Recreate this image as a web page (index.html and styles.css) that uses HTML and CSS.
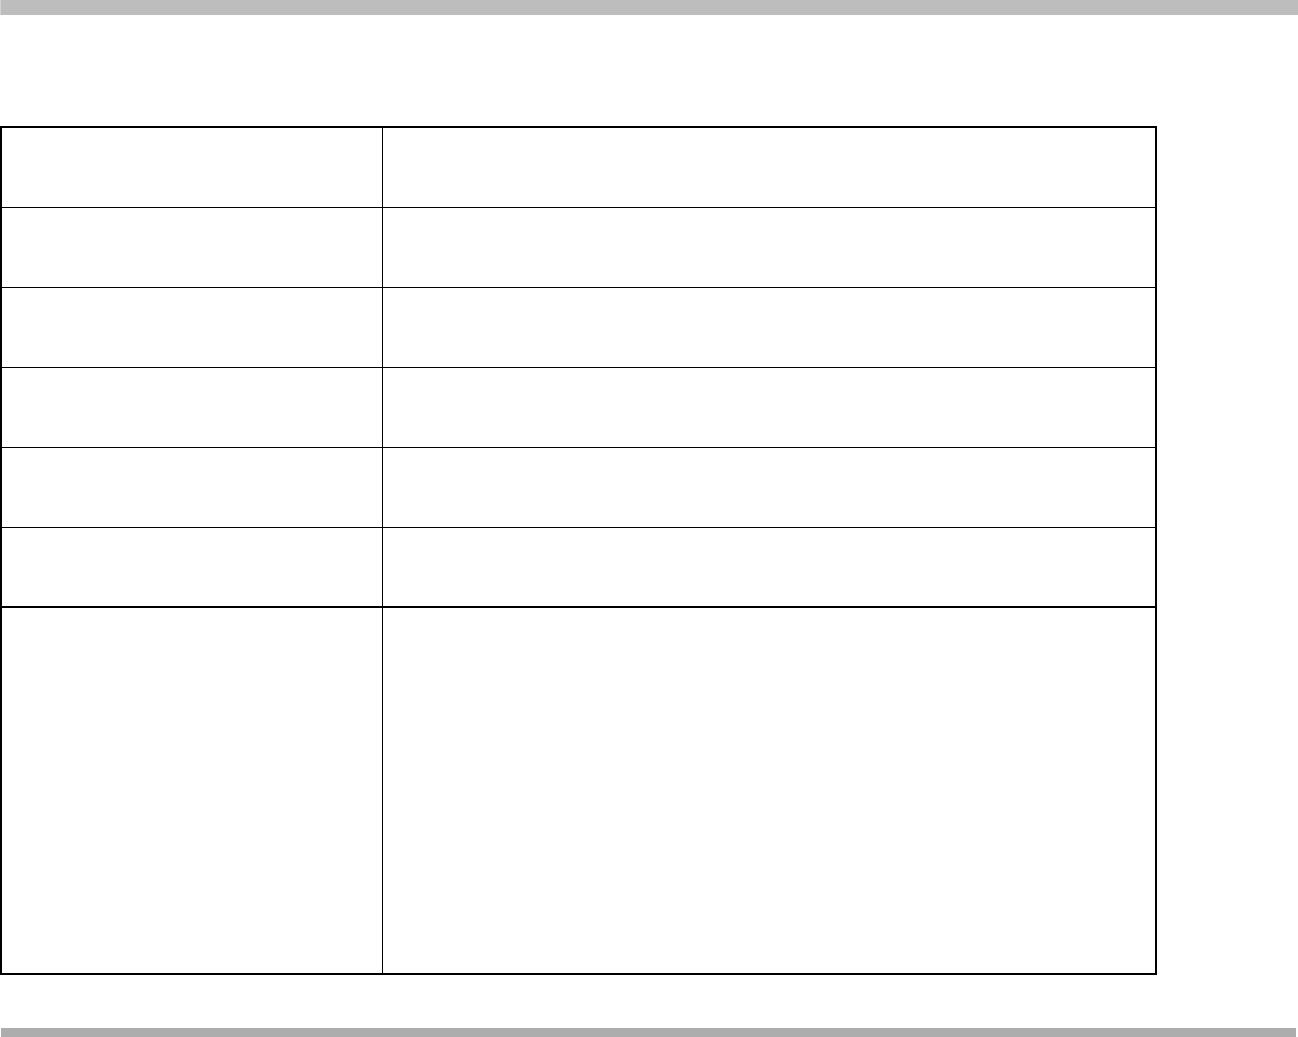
FILE: index.html
```html
<!DOCTYPE html>
<html>
<head>
<meta charset="utf-8">
<link rel="stylesheet" href="styles.css">
</head>
<body>
<div class="topbar"></div>
<div class="grid">
  <div class="cell key"></div><div class="cell val"></div>
  <div class="cell key"></div><div class="cell val"></div>
  <div class="cell key"></div><div class="cell val"></div>
  <div class="cell key"></div><div class="cell val"></div>
  <div class="cell key"></div><div class="cell val"></div>
  <div class="cell key thick"></div><div class="cell val thick"></div>
  <div class="cell key big"></div><div class="cell val big"></div>
</div>
<div class="bottombar"></div>
</body>
</html>
```
FILE: styles.css
```css
html, body {
  margin: 0;
  padding: 0;
  background: #ffffff;
  font-family: "Liberation Sans", Arial, sans-serif;
}
.topbar {
  height: 15px;
  background: #bdbdbd;
  border-left: 1px solid #d2d2d2;
}
.grid {
  box-sizing: border-box;
  margin-top: 111px;
  width: 1157px;
  display: grid;
  grid-template-columns: 381px 1fr;
  grid-template-rows: repeat(6, 80px) 365px;
  border: 2px solid #000;
}
.cell {
  box-sizing: border-box;
  border-bottom: 1px solid #000;
}
.key {
  border-right: 1px solid #000;
}
.thick {
  border-bottom-width: 2px;
}
.big {
  border-bottom: none;
}
.bottombar {
  margin-top: 53px;
  margin-left: 1px;
  width: 1295px;
  height: 9px;
  background: #adadad;
}
```
